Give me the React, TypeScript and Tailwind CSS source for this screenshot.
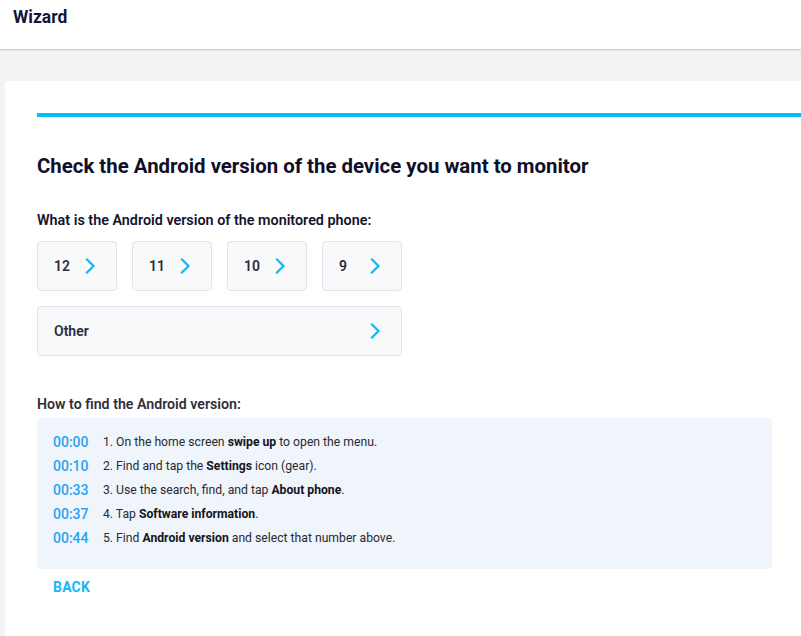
import React from 'react'

const versions = ['12', '11', '10', '9']

const steps: { time: string; parts: [string, boolean][] }[] = [
  { time: '00:00', parts: [['1. On the home screen ', false], ['swipe up', true], [' to open the menu.', false]] },
  { time: '00:10', parts: [['2. Find and tap the ', false], ['Settings', true], [' icon (gear).', false]] },
  { time: '00:33', parts: [['3. Use the search, find, and tap ', false], ['About phone', true], ['.', false]] },
  { time: '00:37', parts: [['4. Tap ', false], ['Software information', true], ['.', false]] },
  { time: '00:44', parts: [['5. Find ', false], ['Android version', true], [' and select that number above.', false]] },
]

function Chevron() {
  return (
    <svg width="12" height="16" viewBox="0 0 12 16" fill="none" className="shrink-0">
      <polyline points="3,1.5 9.5,8 3,14.5" stroke="#12b8f6" strokeWidth="2.2" strokeLinecap="square" />
    </svg>
  )
}

function VersionButton({ label, wide }: { label: string; wide?: boolean }) {
  return (
    <button
      className={`h-[50px] ${wide ? 'w-[365px]' : 'w-[80px]'} flex items-center justify-between pl-[16px] pr-[20px] bg-[#f8f9fb] border border-[#e1e4e8] rounded-[4px] text-[14px] font-semibold text-[#2c2c3a]`}
    >
      <span>{label}</span>
      <Chevron />
    </button>
  )
}

export default function App() {
  return (
    <div className="w-[801px] h-[636px] overflow-hidden bg-[#f3f3f5]" style={{ fontFamily: 'Roboto, "Noto Sans", sans-serif' }}>
      <header className="h-[50px] bg-white border-b border-[#cbcbcf] shadow-[0_1px_2px_rgba(0,0,0,0.06)] flex items-start pl-[13px] pt-[6px]">
        <h1 className="text-[17.5px] font-bold text-[#15153a] leading-[22px]">Wizard</h1>
      </header>

      <div className="pt-[31px] pl-[5px]">
        <div className="bg-white rounded-tl-[3px] pl-[32px] pt-[32px] pb-[40px]">
          <div className="h-[4px] bg-[#00c0f8]" />

          <h2 className="mt-[37px] text-[20.4px] font-bold text-[#0f0f2a] leading-[24px]">
            Check the Android version of the device you want to monitor
          </h2>

          <p className="mt-[34px] text-[14.35px] font-semibold text-[#14142e] leading-[18px]">
            What is the Android version of the monitored phone:
          </p>

          <div className="mt-[11px] flex flex-col gap-[15px]">
            <div className="flex gap-[15px]">
              {versions.map(v => (
                <VersionButton key={v} label={v} />
              ))}
            </div>
            <VersionButton label="Other" wide />
          </div>

          <p className="mt-[39px] text-[14.2px] font-semibold text-[#2f2f3a] leading-[18px]">How to find the Android version:</p>

          <div className="mt-[5px] w-[735px] bg-[#eff5fa] rounded-[4px] pl-[16px] pt-[12px] pb-[19px]">
            {steps.map(s => (
              <div key={s.time} className="flex items-center h-[24px]">
                <span className="w-[50px] text-[14px] font-medium text-[#2ba2f4]">{s.time}</span>
                <span className="text-[12.2px] text-[#2a2a33]">
                  {s.parts.map(([t, b], i) =>
                    b ? <b key={i} className="font-bold text-[#14141e]">{t}</b> : <span key={i}>{t}</span>
                  )}
                </span>
              </div>
            ))}
          </div>

          <button className="mt-[9px] ml-[16px] text-[14px] font-bold text-[#17b6f5] leading-[18px] tracking-[0.2px]">BACK</button>
        </div>
      </div>
    </div>
  )
}
